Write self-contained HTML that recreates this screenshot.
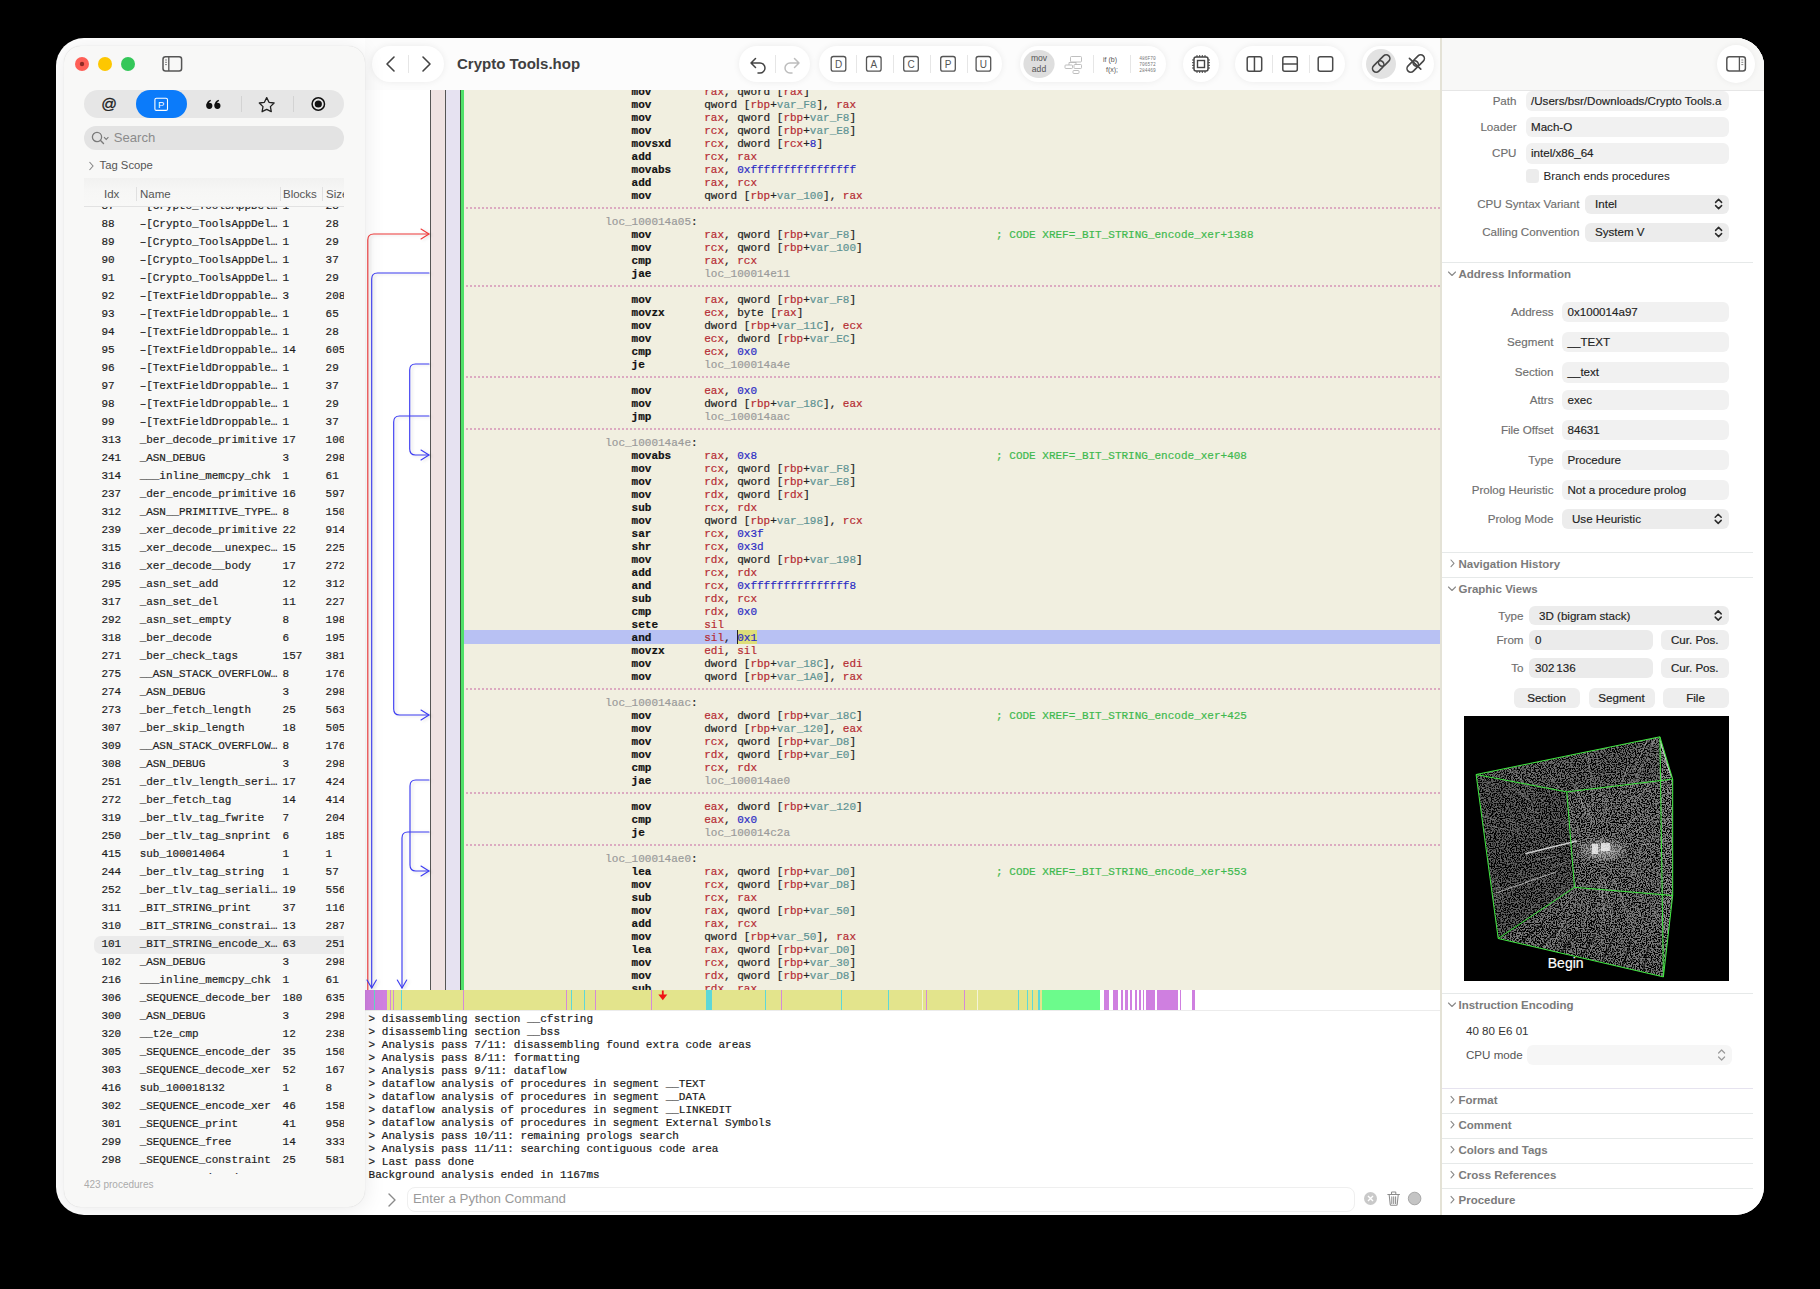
<!DOCTYPE html>
<html><head><meta charset="utf-8">
<style>
*{box-sizing:border-box}
html,body{margin:0;padding:0}
body{width:1820px;height:1289px;background:#000;position:relative;overflow:hidden;font-family:"Liberation Sans",sans-serif;color:#222}
.a{position:absolute}
#win{position:absolute;left:56px;top:38px;width:1708px;height:1177px;border-radius:28px;background:#fff;overflow:hidden}
#stage{position:absolute;left:-56px;top:-38px;width:1820px;height:1289px}
/* code */
#code{position:absolute;left:365px;top:90px;width:1076px;height:900px;overflow:hidden;background:#fff}
#codein{position:absolute;left:-365px;top:-90px;width:1820px;height:1289px}
.cl{position:absolute;font-family:"Liberation Mono",monospace;font-size:11px;line-height:13px;white-space:pre;color:#222;-webkit-text-stroke:0.2px currentColor}
.cl b{font-weight:normal}
.cl b.m{font-weight:bold;color:#111}
.r{color:#b52a32}
.v{color:#5e9393}
.n{color:#2b2bc4}
.l{color:#9a9a9a}
.cm{color:#3fb94e}
.hy{background:#dede7a}
.sep{position:absolute;left:466px;width:975px;height:2px;background-image:linear-gradient(90deg,#dcaac1 0 2px,transparent 2px 4px);background-size:4px 2px}
.hlband{position:absolute;left:464px;width:977px;height:14px;background:#b8c1f3}
.cursor{position:absolute;width:1.2px;height:13.2px;background:#222}
/* sidebar rows */
.rw{position:absolute;left:0;width:344px;height:18px;-webkit-text-stroke:0.2px currentColor;font-family:"Liberation Mono",monospace;font-size:11px;letter-spacing:-0.05px;line-height:18px;white-space:pre;color:#1e1e1e}
.rw span{position:absolute;top:0}
.selrow{position:absolute;left:94px;width:262px;height:18px;border-radius:7px;background:#ebebeb}
.con{font-size:11px;color:#1a1a1a}
.lbl{position:absolute;font-size:11.6px;color:#6e6e6e;-webkit-text-stroke:0.15px currentColor;text-align:right;white-space:nowrap;line-height:14px}
.fld{position:absolute;background:#f1f1f1;-webkit-text-stroke:0.15px currentColor;border-radius:6px;font-size:11.6px;color:#222;white-space:nowrap;line-height:14px;overflow:hidden}
.fld span{position:absolute;top:50%;transform:translateY(-50%)}
.sec{position:absolute;left:1458.5px;font-size:11.5px;font-weight:bold;color:#7b7b7b;white-space:nowrap;line-height:14px}
.hr{position:absolute;left:1442px;width:311px;height:1px;background:#e6e9e9}
.btn{position:absolute;background:#eeeeee;-webkit-text-stroke:0.2px currentColor;border-radius:6px;font-size:11.6px;color:#222;text-align:center;line-height:20px;white-space:nowrap}
.pill{position:absolute;top:46px;height:36px;border-radius:18px;background:#fff;box-shadow:0 0 7px rgba(0,0,0,0.07)}
.div{position:absolute;width:1px;background:#e6e6e6}
</style></head><body>
<div id="win"><div id="stage">

<!-- main content background (toolbar area) -->
<div class="a" style="left:365px;top:38px;width:1076px;height:52px;background:#fcfcfc"></div>

<!-- code view -->
<div id="code"><div id="codein">
  <div class="a" style="left:430px;top:0;width:1px;height:1289px;background:#555"></div>
  <div class="a" style="left:431px;top:0;width:14px;height:1289px;background:#efe2e2"></div>
  <div class="a" style="left:445px;top:0;width:1px;height:1289px;background:#555"></div>
  <div class="a" style="left:446px;top:0;width:14px;height:1289px;background:#e6e2f1"></div>
  <div class="a" style="left:460px;top:0;width:1px;height:1289px;background:#2f5a35"></div>
  <div class="a" style="left:461px;top:0;width:3px;height:1289px;background:#4fe068"></div>
  <div class="a" style="left:464px;top:0;width:977px;height:1289px;background:#f1efe0"></div>
  <svg class="a" style="left:0;top:0;filter:drop-shadow(2px 1px 1.5px rgba(0,0,0,0.13))" width="470" height="1000" viewBox="0 0 470 1000">
    <g fill="none" stroke-width="1.15" stroke-linecap="round" stroke-linejoin="round">
      <path d="M367.8 990 V240 Q367.8 234 373.8 234 H429" stroke="#f03a3a"/>
      <path d="M421 229 L429 234 L421 239" stroke="#f03a3a"/>
      <path d="M429 273 H377.5 Q371.7 273 371.7 279 V988" stroke="#3c3cf2"/>
      <path d="M367 980 L371.7 988 L376.4 980" stroke="#3c3cf2"/>
      <path d="M429 364 H415.5 Q409.7 364 409.7 370 V449 Q409.7 455 415.5 455 H429" stroke="#3c3cf2"/>
      <path d="M421 450 L429 455 L421 460" stroke="#3c3cf2"/>
      <path d="M429 416 H399.5 Q393.7 416 393.7 422 V709 Q393.7 715 399.5 715 H429" stroke="#3c3cf2"/>
      <path d="M421 710 L429 715 L421 720" stroke="#3c3cf2"/>
      <path d="M429 780 H415.8 Q410 780 410 786 V865 Q410 871 415.8 871 H429" stroke="#3c3cf2"/>
      <path d="M421 866 L429 871 L421 876" stroke="#3c3cf2"/>
      <path d="M429 832 H407.8 Q402 832 402 838 V988" stroke="#3c3cf2"/>
      <path d="M397.3 980 L402 988 L406.7 980" stroke="#3c3cf2"/>
    </g>
  </svg>
<div class="cl" style="top:85.57px;left:631.6px"><b class="m">mov</b></div>
<div class="cl" style="top:85.57px;left:704.2px"><b class="r">rax</b>, qword [<b class="r">rax</b>]</div>
<div class="cl" style="top:98.57px;left:631.6px"><b class="m">mov</b></div>
<div class="cl" style="top:98.57px;left:704.2px">qword [<b class="r">rbp</b>+<b class="v">var_F8</b>], <b class="r">rax</b></div>
<div class="cl" style="top:111.57px;left:631.6px"><b class="m">mov</b></div>
<div class="cl" style="top:111.57px;left:704.2px"><b class="r">rax</b>, qword [<b class="r">rbp</b>+<b class="v">var_F8</b>]</div>
<div class="cl" style="top:124.57px;left:631.6px"><b class="m">mov</b></div>
<div class="cl" style="top:124.57px;left:704.2px"><b class="r">rcx</b>, qword [<b class="r">rbp</b>+<b class="v">var_E8</b>]</div>
<div class="cl" style="top:137.57px;left:631.6px"><b class="m">movsxd</b></div>
<div class="cl" style="top:137.57px;left:704.2px"><b class="r">rcx</b>, dword [<b class="r">rcx</b>+<b class="n">8</b>]</div>
<div class="cl" style="top:150.57px;left:631.6px"><b class="m">add</b></div>
<div class="cl" style="top:150.57px;left:704.2px"><b class="r">rcx</b>, <b class="r">rax</b></div>
<div class="cl" style="top:163.57px;left:631.6px"><b class="m">movabs</b></div>
<div class="cl" style="top:163.57px;left:704.2px"><b class="r">rax</b>, <b class="n">0xffffffffffffffff</b></div>
<div class="cl" style="top:176.57px;left:631.6px"><b class="m">add</b></div>
<div class="cl" style="top:176.57px;left:704.2px"><b class="r">rax</b>, <b class="r">rcx</b></div>
<div class="cl" style="top:189.57px;left:631.6px"><b class="m">mov</b></div>
<div class="cl" style="top:189.57px;left:704.2px">qword [<b class="r">rbp</b>+<b class="v">var_100</b>], <b class="r">rax</b></div>
<div class="sep" style="top:206.90px"></div>
<div class="cl" style="top:215.57px;left:605.2px"><b class="l">loc_100014a05</b>:</div>
<div class="cl" style="top:228.57px;left:631.6px"><b class="m">mov</b></div>
<div class="cl" style="top:228.57px;left:704.2px"><b class="r">rax</b>, qword [<b class="r">rbp</b>+<b class="v">var_F8</b>]</div>
<div class="cl cm" style="top:228.57px;left:996.1px">; CODE XREF=_BIT_STRING_encode_xer+1388</div>
<div class="cl" style="top:241.57px;left:631.6px"><b class="m">mov</b></div>
<div class="cl" style="top:241.57px;left:704.2px"><b class="r">rcx</b>, qword [<b class="r">rbp</b>+<b class="v">var_100</b>]</div>
<div class="cl" style="top:254.57px;left:631.6px"><b class="m">cmp</b></div>
<div class="cl" style="top:254.57px;left:704.2px"><b class="r">rax</b>, <b class="r">rcx</b></div>
<div class="cl" style="top:267.57px;left:631.6px"><b class="m">jae</b></div>
<div class="cl" style="top:267.57px;left:704.2px"><b class="l">loc_100014e11</b></div>
<div class="sep" style="top:284.90px"></div>
<div class="cl" style="top:293.57px;left:631.6px"><b class="m">mov</b></div>
<div class="cl" style="top:293.57px;left:704.2px"><b class="r">rax</b>, qword [<b class="r">rbp</b>+<b class="v">var_F8</b>]</div>
<div class="cl" style="top:306.57px;left:631.6px"><b class="m">movzx</b></div>
<div class="cl" style="top:306.57px;left:704.2px"><b class="r">ecx</b>, byte [<b class="r">rax</b>]</div>
<div class="cl" style="top:319.57px;left:631.6px"><b class="m">mov</b></div>
<div class="cl" style="top:319.57px;left:704.2px">dword [<b class="r">rbp</b>+<b class="v">var_11C</b>], <b class="r">ecx</b></div>
<div class="cl" style="top:332.57px;left:631.6px"><b class="m">mov</b></div>
<div class="cl" style="top:332.57px;left:704.2px"><b class="r">ecx</b>, dword [<b class="r">rbp</b>+<b class="v">var_EC</b>]</div>
<div class="cl" style="top:345.57px;left:631.6px"><b class="m">cmp</b></div>
<div class="cl" style="top:345.57px;left:704.2px"><b class="r">ecx</b>, <b class="n">0x0</b></div>
<div class="cl" style="top:358.57px;left:631.6px"><b class="m">je</b></div>
<div class="cl" style="top:358.57px;left:704.2px"><b class="l">loc_100014a4e</b></div>
<div class="sep" style="top:375.90px"></div>
<div class="cl" style="top:384.57px;left:631.6px"><b class="m">mov</b></div>
<div class="cl" style="top:384.57px;left:704.2px"><b class="r">eax</b>, <b class="n">0x0</b></div>
<div class="cl" style="top:397.57px;left:631.6px"><b class="m">mov</b></div>
<div class="cl" style="top:397.57px;left:704.2px">dword [<b class="r">rbp</b>+<b class="v">var_18C</b>], <b class="r">eax</b></div>
<div class="cl" style="top:410.57px;left:631.6px"><b class="m">jmp</b></div>
<div class="cl" style="top:410.57px;left:704.2px"><b class="l">loc_100014aac</b></div>
<div class="sep" style="top:427.90px"></div>
<div class="cl" style="top:436.57px;left:605.2px"><b class="l">loc_100014a4e</b>:</div>
<div class="cl" style="top:449.57px;left:631.6px"><b class="m">movabs</b></div>
<div class="cl" style="top:449.57px;left:704.2px"><b class="r">rax</b>, <b class="n">0x8</b></div>
<div class="cl cm" style="top:449.57px;left:996.1px">; CODE XREF=_BIT_STRING_encode_xer+408</div>
<div class="cl" style="top:462.57px;left:631.6px"><b class="m">mov</b></div>
<div class="cl" style="top:462.57px;left:704.2px"><b class="r">rcx</b>, qword [<b class="r">rbp</b>+<b class="v">var_F8</b>]</div>
<div class="cl" style="top:475.57px;left:631.6px"><b class="m">mov</b></div>
<div class="cl" style="top:475.57px;left:704.2px"><b class="r">rdx</b>, qword [<b class="r">rbp</b>+<b class="v">var_E8</b>]</div>
<div class="cl" style="top:488.57px;left:631.6px"><b class="m">mov</b></div>
<div class="cl" style="top:488.57px;left:704.2px"><b class="r">rdx</b>, qword [<b class="r">rdx</b>]</div>
<div class="cl" style="top:501.57px;left:631.6px"><b class="m">sub</b></div>
<div class="cl" style="top:501.57px;left:704.2px"><b class="r">rcx</b>, <b class="r">rdx</b></div>
<div class="cl" style="top:514.57px;left:631.6px"><b class="m">mov</b></div>
<div class="cl" style="top:514.57px;left:704.2px">qword [<b class="r">rbp</b>+<b class="v">var_198</b>], <b class="r">rcx</b></div>
<div class="cl" style="top:527.57px;left:631.6px"><b class="m">sar</b></div>
<div class="cl" style="top:527.57px;left:704.2px"><b class="r">rcx</b>, <b class="n">0x3f</b></div>
<div class="cl" style="top:540.57px;left:631.6px"><b class="m">shr</b></div>
<div class="cl" style="top:540.57px;left:704.2px"><b class="r">rcx</b>, <b class="n">0x3d</b></div>
<div class="cl" style="top:553.57px;left:631.6px"><b class="m">mov</b></div>
<div class="cl" style="top:553.57px;left:704.2px"><b class="r">rdx</b>, qword [<b class="r">rbp</b>+<b class="v">var_198</b>]</div>
<div class="cl" style="top:566.57px;left:631.6px"><b class="m">add</b></div>
<div class="cl" style="top:566.57px;left:704.2px"><b class="r">rcx</b>, <b class="r">rdx</b></div>
<div class="cl" style="top:579.57px;left:631.6px"><b class="m">and</b></div>
<div class="cl" style="top:579.57px;left:704.2px"><b class="r">rcx</b>, <b class="n">0xfffffffffffffff8</b></div>
<div class="cl" style="top:592.57px;left:631.6px"><b class="m">sub</b></div>
<div class="cl" style="top:592.57px;left:704.2px"><b class="r">rdx</b>, <b class="r">rcx</b></div>
<div class="cl" style="top:605.57px;left:631.6px"><b class="m">cmp</b></div>
<div class="cl" style="top:605.57px;left:704.2px"><b class="r">rdx</b>, <b class="n">0x0</b></div>
<div class="cl" style="top:618.57px;left:631.6px"><b class="m">sete</b></div>
<div class="cl" style="top:618.57px;left:704.2px"><b class="r">sil</b></div>
<div class="hlband" style="top:629.97px"></div>
<div class="a" style="top:630.37px;left:737.6px;width:19.8px;height:13.2px;background:#dede7a"></div>
<div class="cl" style="top:631.57px;left:631.6px"><b class="m">and</b></div>
<div class="cl" style="top:631.57px;left:704.2px"><b class="r">sil</b>, <b class="n">0x1</b></div>
<div class="cursor" style="top:630.37px;left:737.2px"></div>
<div class="cl" style="top:644.57px;left:631.6px"><b class="m">movzx</b></div>
<div class="cl" style="top:644.57px;left:704.2px"><b class="r">edi</b>, <b class="r">sil</b></div>
<div class="cl" style="top:657.57px;left:631.6px"><b class="m">mov</b></div>
<div class="cl" style="top:657.57px;left:704.2px">dword [<b class="r">rbp</b>+<b class="v">var_18C</b>], <b class="r">edi</b></div>
<div class="cl" style="top:670.57px;left:631.6px"><b class="m">mov</b></div>
<div class="cl" style="top:670.57px;left:704.2px">qword [<b class="r">rbp</b>+<b class="v">var_1A0</b>], <b class="r">rax</b></div>
<div class="sep" style="top:687.90px"></div>
<div class="cl" style="top:696.57px;left:605.2px"><b class="l">loc_100014aac</b>:</div>
<div class="cl" style="top:709.57px;left:631.6px"><b class="m">mov</b></div>
<div class="cl" style="top:709.57px;left:704.2px"><b class="r">eax</b>, dword [<b class="r">rbp</b>+<b class="v">var_18C</b>]</div>
<div class="cl cm" style="top:709.57px;left:996.1px">; CODE XREF=_BIT_STRING_encode_xer+425</div>
<div class="cl" style="top:722.57px;left:631.6px"><b class="m">mov</b></div>
<div class="cl" style="top:722.57px;left:704.2px">dword [<b class="r">rbp</b>+<b class="v">var_120</b>], <b class="r">eax</b></div>
<div class="cl" style="top:735.57px;left:631.6px"><b class="m">mov</b></div>
<div class="cl" style="top:735.57px;left:704.2px"><b class="r">rcx</b>, qword [<b class="r">rbp</b>+<b class="v">var_D8</b>]</div>
<div class="cl" style="top:748.57px;left:631.6px"><b class="m">mov</b></div>
<div class="cl" style="top:748.57px;left:704.2px"><b class="r">rdx</b>, qword [<b class="r">rbp</b>+<b class="v">var_E0</b>]</div>
<div class="cl" style="top:761.57px;left:631.6px"><b class="m">cmp</b></div>
<div class="cl" style="top:761.57px;left:704.2px"><b class="r">rcx</b>, <b class="r">rdx</b></div>
<div class="cl" style="top:774.57px;left:631.6px"><b class="m">jae</b></div>
<div class="cl" style="top:774.57px;left:704.2px"><b class="l">loc_100014ae0</b></div>
<div class="sep" style="top:791.90px"></div>
<div class="cl" style="top:800.57px;left:631.6px"><b class="m">mov</b></div>
<div class="cl" style="top:800.57px;left:704.2px"><b class="r">eax</b>, dword [<b class="r">rbp</b>+<b class="v">var_120</b>]</div>
<div class="cl" style="top:813.57px;left:631.6px"><b class="m">cmp</b></div>
<div class="cl" style="top:813.57px;left:704.2px"><b class="r">eax</b>, <b class="n">0x0</b></div>
<div class="cl" style="top:826.57px;left:631.6px"><b class="m">je</b></div>
<div class="cl" style="top:826.57px;left:704.2px"><b class="l">loc_100014c2a</b></div>
<div class="sep" style="top:843.90px"></div>
<div class="cl" style="top:852.57px;left:605.2px"><b class="l">loc_100014ae0</b>:</div>
<div class="cl" style="top:865.57px;left:631.6px"><b class="m">lea</b></div>
<div class="cl" style="top:865.57px;left:704.2px"><b class="r">rax</b>, qword [<b class="r">rbp</b>+<b class="v">var_D0</b>]</div>
<div class="cl cm" style="top:865.57px;left:996.1px">; CODE XREF=_BIT_STRING_encode_xer+553</div>
<div class="cl" style="top:878.57px;left:631.6px"><b class="m">mov</b></div>
<div class="cl" style="top:878.57px;left:704.2px"><b class="r">rcx</b>, qword [<b class="r">rbp</b>+<b class="v">var_D8</b>]</div>
<div class="cl" style="top:891.57px;left:631.6px"><b class="m">sub</b></div>
<div class="cl" style="top:891.57px;left:704.2px"><b class="r">rcx</b>, <b class="r">rax</b></div>
<div class="cl" style="top:904.57px;left:631.6px"><b class="m">mov</b></div>
<div class="cl" style="top:904.57px;left:704.2px"><b class="r">rax</b>, qword [<b class="r">rbp</b>+<b class="v">var_50</b>]</div>
<div class="cl" style="top:917.57px;left:631.6px"><b class="m">add</b></div>
<div class="cl" style="top:917.57px;left:704.2px"><b class="r">rax</b>, <b class="r">rcx</b></div>
<div class="cl" style="top:930.57px;left:631.6px"><b class="m">mov</b></div>
<div class="cl" style="top:930.57px;left:704.2px">qword [<b class="r">rbp</b>+<b class="v">var_50</b>], <b class="r">rax</b></div>
<div class="cl" style="top:943.57px;left:631.6px"><b class="m">lea</b></div>
<div class="cl" style="top:943.57px;left:704.2px"><b class="r">rax</b>, qword [<b class="r">rbp</b>+<b class="v">var_D0</b>]</div>
<div class="cl" style="top:956.57px;left:631.6px"><b class="m">mov</b></div>
<div class="cl" style="top:956.57px;left:704.2px"><b class="r">rcx</b>, qword [<b class="r">rbp</b>+<b class="v">var_30</b>]</div>
<div class="cl" style="top:969.57px;left:631.6px"><b class="m">mov</b></div>
<div class="cl" style="top:969.57px;left:704.2px"><b class="r">rdx</b>, qword [<b class="r">rbp</b>+<b class="v">var_D8</b>]</div>
<div class="cl" style="top:982.57px;left:631.6px"><b class="m">sub</b></div>
<div class="cl" style="top:982.57px;left:704.2px"><b class="r">rdx</b>, <b class="r">rax</b></div>
</div></div>

<!-- overview strip -->
<div class="a" style="left:364px;top:990px;width:1077px;height:21px;background:#fff;border-bottom:1px solid #ececec"></div>
<svg class="a" style="left:0;top:990px" width="1441" height="20" viewBox="0 990 1441 20" shape-rendering="crispEdges">
  <rect x="364" y="990" width="23" height="20" fill="#cf7fe0"/>
  <rect x="374" y="990" width="1" height="20" fill="#63d8c6"/>
  <rect x="387" y="990" width="808" height="20" fill="#e3e48c"/>
  <g fill="#d48ad8">
    <rect x="390" y="990" width="1" height="20"/><rect x="392.5" y="990" width="1" height="20"/>
    <rect x="463" y="990" width="1" height="20"/><rect x="566" y="990" width="1" height="20"/>
    <rect x="595" y="990" width="1" height="20"/><rect x="651" y="990" width="1" height="20"/>
    <rect x="781" y="990" width="1" height="20"/><rect x="926" y="990" width="1" height="20"/>
    <rect x="964" y="990" width="1" height="20"/>
  </g>
  <g fill="#5ed8d8">
    <rect x="401" y="990" width="1" height="20"/><rect x="571" y="990" width="1" height="20"/>
    <rect x="584" y="990" width="1" height="20"/><rect x="706" y="990" width="6" height="20"/>
    <rect x="765" y="990" width="1" height="20"/><rect x="841" y="990" width="1" height="20"/>
    <rect x="888" y="990" width="1" height="20"/><rect x="1018" y="990" width="1" height="20"/>
    <rect x="1027" y="990" width="1" height="20"/><rect x="1032" y="990" width="1" height="20"/>
    <rect x="1038" y="990" width="2" height="20"/>
  </g>
  <g fill="#f4f4d8"><rect x="922" y="990" width="1" height="20"/><rect x="977" y="990" width="1" height="20"/></g>
  <rect x="1042" y="990" width="58" height="20" fill="#6cfb8c"/>
  <rect x="1100" y="990" width="95" height="20" fill="#fff"/>
  <g fill="#cf7fe0">
    <rect x="1104" y="990" width="4.5" height="20"/><rect x="1113" y="990" width="5" height="20"/>
    <rect x="1121" y="990" width="2" height="20"/><rect x="1125" y="990" width="2.5" height="20"/>
    <rect x="1129.5" y="990" width="2.5" height="20"/><rect x="1135" y="990" width="2" height="20"/>
    <rect x="1138.5" y="990" width="2" height="20"/><rect x="1142.5" y="990" width="1.5" height="20"/>
    <rect x="1146" y="990" width="9" height="20"/><rect x="1157" y="990" width="2.5" height="20"/>
    <rect x="1160" y="990" width="18" height="20"/><rect x="1179.5" y="990" width="1" height="20"/>
    <rect x="1192" y="990" width="3" height="20"/>
  </g>
  <g fill="#f01414" shape-rendering="geometricPrecision"><rect x="661.9" y="990.5" width="1.8" height="5.5"/><path d="M658.3 994.5 H667.3 L662.8 1000.3 Z"/></g>
</svg>

<!-- console -->
<div class="a" style="left:364px;top:1011px;width:1077px;height:204px;background:#fff"></div>
<div class="cl con" style="top:1012.87px;left:368.6px">&gt; disassembling section __cfstring</div>
<div class="cl con" style="top:1025.87px;left:368.6px">&gt; disassembling section __bss</div>
<div class="cl con" style="top:1038.87px;left:368.6px">&gt; Analysis pass 7/11: disassembling found extra code areas</div>
<div class="cl con" style="top:1051.87px;left:368.6px">&gt; Analysis pass 8/11: formatting</div>
<div class="cl con" style="top:1064.87px;left:368.6px">&gt; Analysis pass 9/11: dataflow</div>
<div class="cl con" style="top:1077.87px;left:368.6px">&gt; dataflow analysis of procedures in segment __TEXT</div>
<div class="cl con" style="top:1090.87px;left:368.6px">&gt; dataflow analysis of procedures in segment __DATA</div>
<div class="cl con" style="top:1103.87px;left:368.6px">&gt; dataflow analysis of procedures in segment __LINKEDIT</div>
<div class="cl con" style="top:1116.87px;left:368.6px">&gt; dataflow analysis of procedures in segment External Symbols</div>
<div class="cl con" style="top:1129.87px;left:368.6px">&gt; Analysis pass 10/11: remaining prologs search</div>
<div class="cl con" style="top:1142.87px;left:368.6px">&gt; Analysis pass 11/11: searching contiguous code area</div>
<div class="cl con" style="top:1155.87px;left:368.6px">&gt; Last pass done</div>
<div class="cl con" style="top:1168.87px;left:368.6px">Background analysis ended in 1167ms</div>
<!-- python input -->
<svg class="a" style="left:386px;top:1192px" width="12" height="16" viewBox="0 0 12 16"><path d="M3 2 L9 8 L3 14" fill="none" stroke="#8a8a8a" stroke-width="1.4" stroke-linecap="round" stroke-linejoin="round"/></svg>
<div class="a" style="left:407px;top:1186.5px;width:948px;height:25.5px;border-radius:8px;border:1px solid #efefef;background:#fff"></div>
<div class="a" style="left:413px;top:1191px;font-size:13.3px;line-height:16px;color:#9a9a9a;white-space:nowrap">Enter a Python Command</div>
<svg class="a" style="left:1362px;top:1190px" width="60" height="18" viewBox="0 0 60 18">
  <circle cx="8.5" cy="8.5" r="6.5" fill="#c9c9c9"/>
  <path d="M6 6 L11 11 M11 6 L6 11" stroke="#fff" stroke-width="1.4"/>
  <path d="M25.8 4.5 H37.5 M29.5 4.3 V2.6 Q29.5 2 30.2 2 H33.2 Q33.8 2 33.8 2.6 V4.3 M27.2 5 L28.2 14.4 Q28.3 15.2 29.1 15.2 H34.3 Q35.1 15.2 35.2 14.4 L36.2 5 M29.8 6.8 V13.4 M31.7 6.8 V13.4 M33.6 6.8 V13.4" fill="none" stroke="#8c8c8c" stroke-width="1.05" stroke-linecap="round"/>
  <circle cx="52.6" cy="8.5" r="6.3" fill="#c4c4c4" stroke="#9a9a9a" stroke-width="0.8"/>
</svg>

<!-- toolbar pills -->
<div class="pill" style="left:372px;width:72px"></div>
<div class="div" style="left:408px;top:55px;height:18px"></div>
<svg class="a" style="left:380px;top:54px" width="56" height="20" viewBox="0 0 56 20"><path d="M14 3 L7 10 L14 17 M43 3 L50 10 L43 17" fill="none" stroke="#444" stroke-width="1.6" stroke-linecap="round" stroke-linejoin="round"/></svg>
<div class="a" style="left:457px;top:55px;font-size:15px;font-weight:bold;color:#404040;line-height:18px;white-space:nowrap">Crypto Tools.hop</div>

<div class="pill" style="left:738.5px;width:71.5px"></div>
<div class="div" style="left:774.5px;top:55px;height:18px"></div>
<svg class="a" style="left:745px;top:54px" width="60" height="20" viewBox="0 0 60 20">
  <path d="M6 9 H15 A5 5 0 0 1 15 19 H13 M6 9 L10.5 4.5 M6 9 L10.5 13.5" fill="none" stroke="#444" stroke-width="1.5" stroke-linecap="round" stroke-linejoin="round"/>
  <path d="M54 9 H45 A5 5 0 0 0 45 19 H47 M54 9 L49.5 4.5 M54 9 L49.5 13.5" fill="none" stroke="#bdbdbd" stroke-width="1.5" stroke-linecap="round" stroke-linejoin="round"/>
</svg>

<div class="pill" style="left:819px;width:183px"></div>
<div class="div" style="left:855.5px;top:55px;height:18px"></div>
<div class="div" style="left:892.5px;top:55px;height:18px"></div>
<div class="div" style="left:930px;top:55px;height:18px"></div>
<div class="div" style="left:966.5px;top:55px;height:18px"></div>
<svg class="a" style="left:819px;top:46px" width="183" height="36" viewBox="0 0 183 36">
  <g fill="none" stroke="#555" stroke-width="1.3">
    <rect x="12.2" y="10.5" width="14.6" height="14.6" rx="2.2"/>
    <rect x="47.5" y="10.5" width="14.6" height="14.6" rx="2.2"/>
    <rect x="84.7" y="10.5" width="14.6" height="14.6" rx="2.2"/>
    <rect x="121.7" y="10.5" width="14.6" height="14.6" rx="2.2"/>
    <rect x="157.1" y="10.5" width="14.6" height="14.6" rx="2.2"/>
  </g>
  <g font-family="Liberation Sans" font-size="10" fill="#555" text-anchor="middle">
    <text x="19.5" y="21.8">D</text><text x="54.8" y="21.8">A</text><text x="92" y="21.8">C</text><text x="129" y="21.8">P</text><text x="164.4" y="21.8">U</text>
  </g>
</svg>

<div class="pill" style="left:1019.5px;width:146px"></div>
<div class="div" style="left:1092.5px;top:55px;height:18px"></div>
<div class="div" style="left:1129.5px;top:55px;height:18px"></div>
<svg class="a" style="left:1019.5px;top:46px" width="146" height="36" viewBox="0 0 146 36">
  <ellipse cx="19" cy="18" rx="15.6" ry="14" fill="#dedede"/>
  <g font-family="Liberation Sans" font-size="8.6" fill="#555" text-anchor="middle"><text x="19" y="15">mov</text><text x="19" y="25.5">add</text></g>
  <g fill="none" stroke="#b8b8b8" stroke-width="0.9">
    <rect x="50.5" y="10.5" width="11" height="5.5" rx="1"/>
    <rect x="45" y="19" width="7.5" height="3.5" rx="0.8"/>
    <rect x="54" y="18.5" width="7.5" height="4" rx="0.8"/>
    <rect x="53" y="24.5" width="6" height="3" rx="0.8"/>
    <path d="M56 16 V18.5 M49 19 V16.5 H56"/>
  </g>
  <g font-family="Liberation Sans" font-size="7" fill="#555" text-anchor="middle"><text x="90" y="16">if (b)</text><text x="92" y="25.5">f(x);</text></g>
  <g font-family="Liberation Mono" font-size="4.6" fill="#777" text-anchor="middle"><text x="127.5" y="13.5">486F70</text><text x="127.5" y="19.5">706572</text><text x="127.5" y="25.5">284469</text></g>
</svg>

<div class="pill" style="left:1182.5px;width:36px"></div>
<svg class="a" style="left:1182.5px;top:46px" width="36" height="36" viewBox="0 0 36 36">
  <rect x="11" y="11" width="14" height="14" rx="2" fill="none" stroke="#444" stroke-width="1.5"/>
  <rect x="14.5" y="14.5" width="7" height="7" fill="none" stroke="#444" stroke-width="1.4"/>
  <path d="M14 9 V11 M16.7 9 V11 M19.3 9 V11 M22 9 V11 M14 25 V27 M16.7 25 V27 M19.3 25 V27 M22 25 V27 M9 14 H11 M9 16.7 H11 M9 19.3 H11 M9 22 H11 M25 14 H27 M25 16.7 H27 M25 19.3 H27 M25 22 H27" stroke="#444" stroke-width="1"/>
</svg>

<div class="pill" style="left:1235px;width:110px"></div>
<div class="div" style="left:1271.5px;top:55px;height:18px"></div>
<div class="div" style="left:1308.5px;top:55px;height:18px"></div>
<svg class="a" style="left:1235px;top:46px" width="110" height="36" viewBox="0 0 110 36">
  <g fill="none" stroke="#4a4a4a" stroke-width="1.5">
    <rect x="12.2" y="10.8" width="14.5" height="14.5" rx="2"/><path d="M19.45 10.8 V25.3"/>
    <rect x="47.8" y="10.8" width="14.5" height="14.5" rx="2"/><path d="M47.8 18.05 H62.3"/>
    <rect x="83.2" y="10.8" width="14.5" height="14.5" rx="2"/>
  </g>
</svg>

<div class="pill" style="left:1361.5px;width:72px"></div>
<svg class="a" style="left:1361.5px;top:46px" width="72" height="36" viewBox="0 0 72 36">
  <circle cx="19" cy="18" r="15" fill="#e2e2e2"/>
  <g fill="none" stroke="#474747" stroke-width="1.6"><rect x="9.70" y="16.80" width="13" height="7.4" rx="3.7" transform="rotate(-45 16.2 20.5)"/><rect x="15.70" y="10.80" width="13" height="7.4" rx="3.7" transform="rotate(-45 22.2 14.5)"/></g>
  <g fill="none" stroke="#474747" stroke-width="1.6"><rect x="44.20" y="16.80" width="13" height="7.4" rx="3.7" transform="rotate(-45 50.7 20.5)"/><rect x="50.20" y="10.80" width="13" height="7.4" rx="3.7" transform="rotate(-45 56.7 14.5)"/>
    <path d="M47.4 12.3 L58.8 23.1" stroke-linecap="round"/>
  </g>
</svg>

<!-- sidebar panel -->
<div class="a" style="left:64px;top:46px;width:301px;height:1161px;border-radius:17px;background:#f8f8f7;box-shadow:0 0 1px rgba(0,0,0,0.18),0 2px 22px rgba(0,0,0,0.09)"></div>
<svg class="a" style="left:70px;top:52px" width="120" height="24" viewBox="70 52 120 24">
  <circle cx="82" cy="64" r="7" fill="#fe5f57"/><circle cx="82" cy="64" r="2.2" fill="#8f2a25"/>
  <circle cx="105" cy="64" r="7" fill="#fdc701"/>
  <circle cx="128" cy="64" r="7" fill="#34c759"/>
  <rect x="163" y="56.8" width="18.6" height="14.2" rx="2.5" fill="none" stroke="#555" stroke-width="1.5"/>
  <path d="M168.8 57 V71" stroke="#555" stroke-width="1.3"/>
  <path d="M165 60 H167 M165 62.3 H167 M165 64.6 H167" stroke="#777" stroke-width="0.9"/>
</svg>
<!-- segmented -->
<div class="a" style="left:84px;top:90px;width:260px;height:28px;border-radius:14px;background:#e6e6e6"></div>
<div class="a" style="left:136px;top:90px;width:50.5px;height:28px;border-radius:14px;background:#0b7bfa"></div>
<div class="div" style="left:240.5px;top:96px;height:16px;background:#d3d3d3"></div>
<div class="div" style="left:292.5px;top:96px;height:16px;background:#d3d3d3"></div>
<svg class="a" style="left:84px;top:90px" width="260" height="28" viewBox="0 0 260 28">
  <text x="25.2" y="19.4" font-family="Liberation Sans" font-size="15.5" fill="#222" text-anchor="middle" stroke="#222" stroke-width="0.3">@</text>
  <rect x="70.9" y="8.2" width="12.6" height="12.2" rx="1.5" fill="none" stroke="#fff" stroke-width="1.1"/>
  <text x="77.2" y="17.8" font-family="Liberation Sans" font-size="9.5" fill="#fff" text-anchor="middle">P</text>
  <g fill="#111" transform="translate(0 -0.8)"><circle cx="125.3" cy="16.6" r="3.1"/><path d="M122.4 16.2 Q122.6 11.8 126.6 10.6 L126.9 11.7 Q124.6 12.7 124.6 15 Z"/><circle cx="133.4" cy="16.6" r="3.1"/><path d="M130.5 16.2 Q130.7 11.8 134.7 10.6 L135 11.7 Q132.7 12.7 132.7 15 Z"/></g>
  <path d="M182.7 7.6 L185 12.3 L190.1 13 L186.4 16.6 L187.3 21.7 L182.7 19.3 L178.1 21.7 L179 16.6 L175.3 13 L180.4 12.3 Z" fill="none" stroke="#222" stroke-width="1.3" stroke-linejoin="round"/>
  <circle cx="234.3" cy="14" r="6.2" fill="none" stroke="#111" stroke-width="1.5"/>
  <circle cx="234.3" cy="14" r="3.6" fill="#111"/>
</svg>
<!-- search -->
<div class="a" style="left:84px;top:126px;width:260px;height:24px;border-radius:12px;background:#e3e3e3"></div>
<svg class="a" style="left:90px;top:130px" width="22" height="16" viewBox="0 0 22 16">
  <circle cx="7" cy="7" r="4.6" fill="none" stroke="#7a7a7a" stroke-width="1.3"/>
  <path d="M10.3 10.3 L13.5 13.5" stroke="#7a7a7a" stroke-width="1.4" stroke-linecap="round"/>
  <path d="M14 7.2 L16.2 9.4 L18.4 7.2" fill="none" stroke="#7a7a7a" stroke-width="1.1"/>
</svg>
<div class="a" style="left:113.8px;top:130px;font-size:13.1px;line-height:16px;color:#8b8b8b">Search</div>
<svg class="a" style="left:86px;top:159px" width="10" height="14" viewBox="0 0 10 14"><path d="M3.5 3 L7 7 L3.5 11" fill="none" stroke="#888" stroke-width="1.1"/></svg>
<div class="a" style="left:99.5px;top:158px;font-size:11.3px;line-height:14px;color:#555">Tag Scope</div>

<!-- table -->
<div class="a" style="left:84px;top:207px;width:260px;height:966.5px;overflow:hidden">
  <div class="a" style="left:-84px;top:-207px;width:400px;height:1300px">
<div class="rw" style="top:197.05px"><span style="left:101.5px">87</span><span style="left:139.7px">–[Crypto_ToolsAppDel…</span><span style="left:282.6px">1</span><span class="sz" style="left:325.6px">28</span></div>
<div class="rw" style="top:215.05px"><span style="left:101.5px">88</span><span style="left:139.7px">–[Crypto_ToolsAppDel…</span><span style="left:282.6px">1</span><span class="sz" style="left:325.6px">28</span></div>
<div class="rw" style="top:233.05px"><span style="left:101.5px">89</span><span style="left:139.7px">–[Crypto_ToolsAppDel…</span><span style="left:282.6px">1</span><span class="sz" style="left:325.6px">29</span></div>
<div class="rw" style="top:251.05px"><span style="left:101.5px">90</span><span style="left:139.7px">–[Crypto_ToolsAppDel…</span><span style="left:282.6px">1</span><span class="sz" style="left:325.6px">37</span></div>
<div class="rw" style="top:269.05px"><span style="left:101.5px">91</span><span style="left:139.7px">–[Crypto_ToolsAppDel…</span><span style="left:282.6px">1</span><span class="sz" style="left:325.6px">29</span></div>
<div class="rw" style="top:287.05px"><span style="left:101.5px">92</span><span style="left:139.7px">–[TextFieldDroppable…</span><span style="left:282.6px">3</span><span class="sz" style="left:325.6px">208</span></div>
<div class="rw" style="top:305.05px"><span style="left:101.5px">93</span><span style="left:139.7px">–[TextFieldDroppable…</span><span style="left:282.6px">1</span><span class="sz" style="left:325.6px">65</span></div>
<div class="rw" style="top:323.05px"><span style="left:101.5px">94</span><span style="left:139.7px">–[TextFieldDroppable…</span><span style="left:282.6px">1</span><span class="sz" style="left:325.6px">28</span></div>
<div class="rw" style="top:341.05px"><span style="left:101.5px">95</span><span style="left:139.7px">–[TextFieldDroppable…</span><span style="left:282.6px">14</span><span class="sz" style="left:325.6px">605</span></div>
<div class="rw" style="top:359.05px"><span style="left:101.5px">96</span><span style="left:139.7px">–[TextFieldDroppable…</span><span style="left:282.6px">1</span><span class="sz" style="left:325.6px">29</span></div>
<div class="rw" style="top:377.05px"><span style="left:101.5px">97</span><span style="left:139.7px">–[TextFieldDroppable…</span><span style="left:282.6px">1</span><span class="sz" style="left:325.6px">37</span></div>
<div class="rw" style="top:395.05px"><span style="left:101.5px">98</span><span style="left:139.7px">–[TextFieldDroppable…</span><span style="left:282.6px">1</span><span class="sz" style="left:325.6px">29</span></div>
<div class="rw" style="top:413.05px"><span style="left:101.5px">99</span><span style="left:139.7px">–[TextFieldDroppable…</span><span style="left:282.6px">1</span><span class="sz" style="left:325.6px">37</span></div>
<div class="rw" style="top:431.05px"><span style="left:101.5px">313</span><span style="left:139.7px">_ber_decode_primitive</span><span style="left:282.6px">17</span><span class="sz" style="left:325.6px">100</span></div>
<div class="rw" style="top:449.05px"><span style="left:101.5px">241</span><span style="left:139.7px">_ASN_DEBUG</span><span style="left:282.6px">3</span><span class="sz" style="left:325.6px">298</span></div>
<div class="rw" style="top:467.05px"><span style="left:101.5px">314</span><span style="left:139.7px">___inline_memcpy_chk</span><span style="left:282.6px">1</span><span class="sz" style="left:325.6px">61</span></div>
<div class="rw" style="top:485.05px"><span style="left:101.5px">237</span><span style="left:139.7px">_der_encode_primitive</span><span style="left:282.6px">16</span><span class="sz" style="left:325.6px">597</span></div>
<div class="rw" style="top:503.05px"><span style="left:101.5px">312</span><span style="left:139.7px">_ASN__PRIMITIVE_TYPE…</span><span style="left:282.6px">8</span><span class="sz" style="left:325.6px">150</span></div>
<div class="rw" style="top:521.05px"><span style="left:101.5px">239</span><span style="left:139.7px">_xer_decode_primitive</span><span style="left:282.6px">22</span><span class="sz" style="left:325.6px">914</span></div>
<div class="rw" style="top:539.05px"><span style="left:101.5px">315</span><span style="left:139.7px">_xer_decode__unexpec…</span><span style="left:282.6px">15</span><span class="sz" style="left:325.6px">225</span></div>
<div class="rw" style="top:557.05px"><span style="left:101.5px">316</span><span style="left:139.7px">_xer_decode__body</span><span style="left:282.6px">17</span><span class="sz" style="left:325.6px">272</span></div>
<div class="rw" style="top:575.05px"><span style="left:101.5px">295</span><span style="left:139.7px">_asn_set_add</span><span style="left:282.6px">12</span><span class="sz" style="left:325.6px">312</span></div>
<div class="rw" style="top:593.05px"><span style="left:101.5px">317</span><span style="left:139.7px">_asn_set_del</span><span style="left:282.6px">11</span><span class="sz" style="left:325.6px">227</span></div>
<div class="rw" style="top:611.05px"><span style="left:101.5px">292</span><span style="left:139.7px">_asn_set_empty</span><span style="left:282.6px">8</span><span class="sz" style="left:325.6px">198</span></div>
<div class="rw" style="top:629.05px"><span style="left:101.5px">318</span><span style="left:139.7px">_ber_decode</span><span style="left:282.6px">6</span><span class="sz" style="left:325.6px">195</span></div>
<div class="rw" style="top:647.05px"><span style="left:101.5px">271</span><span style="left:139.7px">_ber_check_tags</span><span style="left:282.6px">157</span><span class="sz" style="left:325.6px">381</span></div>
<div class="rw" style="top:665.05px"><span style="left:101.5px">275</span><span style="left:139.7px">__ASN_STACK_OVERFLOW…</span><span style="left:282.6px">8</span><span class="sz" style="left:325.6px">176</span></div>
<div class="rw" style="top:683.05px"><span style="left:101.5px">274</span><span style="left:139.7px">_ASN_DEBUG</span><span style="left:282.6px">3</span><span class="sz" style="left:325.6px">298</span></div>
<div class="rw" style="top:701.05px"><span style="left:101.5px">273</span><span style="left:139.7px">_ber_fetch_length</span><span style="left:282.6px">25</span><span class="sz" style="left:325.6px">563</span></div>
<div class="rw" style="top:719.05px"><span style="left:101.5px">307</span><span style="left:139.7px">_ber_skip_length</span><span style="left:282.6px">18</span><span class="sz" style="left:325.6px">505</span></div>
<div class="rw" style="top:737.05px"><span style="left:101.5px">309</span><span style="left:139.7px">__ASN_STACK_OVERFLOW…</span><span style="left:282.6px">8</span><span class="sz" style="left:325.6px">176</span></div>
<div class="rw" style="top:755.05px"><span style="left:101.5px">308</span><span style="left:139.7px">_ASN_DEBUG</span><span style="left:282.6px">3</span><span class="sz" style="left:325.6px">298</span></div>
<div class="rw" style="top:773.05px"><span style="left:101.5px">251</span><span style="left:139.7px">_der_tlv_length_seri…</span><span style="left:282.6px">17</span><span class="sz" style="left:325.6px">424</span></div>
<div class="rw" style="top:791.05px"><span style="left:101.5px">272</span><span style="left:139.7px">_ber_fetch_tag</span><span style="left:282.6px">14</span><span class="sz" style="left:325.6px">414</span></div>
<div class="rw" style="top:809.05px"><span style="left:101.5px">319</span><span style="left:139.7px">_ber_tlv_tag_fwrite</span><span style="left:282.6px">7</span><span class="sz" style="left:325.6px">204</span></div>
<div class="rw" style="top:827.05px"><span style="left:101.5px">250</span><span style="left:139.7px">_ber_tlv_tag_snprint</span><span style="left:282.6px">6</span><span class="sz" style="left:325.6px">185</span></div>
<div class="rw" style="top:845.05px"><span style="left:101.5px">415</span><span style="left:139.7px">sub_100014064</span><span style="left:282.6px">1</span><span class="sz" style="left:325.6px">1</span></div>
<div class="rw" style="top:863.05px"><span style="left:101.5px">244</span><span style="left:139.7px">_ber_tlv_tag_string</span><span style="left:282.6px">1</span><span class="sz" style="left:325.6px">57</span></div>
<div class="rw" style="top:881.05px"><span style="left:101.5px">252</span><span style="left:139.7px">_ber_tlv_tag_seriali…</span><span style="left:282.6px">19</span><span class="sz" style="left:325.6px">556</span></div>
<div class="rw" style="top:899.05px"><span style="left:101.5px">311</span><span style="left:139.7px">_BIT_STRING_print</span><span style="left:282.6px">37</span><span class="sz" style="left:325.6px">116</span></div>
<div class="rw" style="top:917.05px"><span style="left:101.5px">310</span><span style="left:139.7px">_BIT_STRING_constrai…</span><span style="left:282.6px">13</span><span class="sz" style="left:325.6px">287</span></div>
<div class="selrow" style="top:935.55px"></div>
<div class="rw" style="top:935.05px"><span style="left:101.5px">101</span><span style="left:139.7px">_BIT_STRING_encode_x…</span><span style="left:282.6px">63</span><span class="sz" style="left:325.6px">251</span></div>
<div class="rw" style="top:953.05px"><span style="left:101.5px">102</span><span style="left:139.7px">_ASN_DEBUG</span><span style="left:282.6px">3</span><span class="sz" style="left:325.6px">298</span></div>
<div class="rw" style="top:971.05px"><span style="left:101.5px">216</span><span style="left:139.7px">___inline_memcpy_chk</span><span style="left:282.6px">1</span><span class="sz" style="left:325.6px">61</span></div>
<div class="rw" style="top:989.05px"><span style="left:101.5px">306</span><span style="left:139.7px">_SEQUENCE_decode_ber</span><span style="left:282.6px">180</span><span class="sz" style="left:325.6px">635</span></div>
<div class="rw" style="top:1007.05px"><span style="left:101.5px">300</span><span style="left:139.7px">_ASN_DEBUG</span><span style="left:282.6px">3</span><span class="sz" style="left:325.6px">298</span></div>
<div class="rw" style="top:1025.05px"><span style="left:101.5px">320</span><span style="left:139.7px">__t2e_cmp</span><span style="left:282.6px">12</span><span class="sz" style="left:325.6px">238</span></div>
<div class="rw" style="top:1043.05px"><span style="left:101.5px">305</span><span style="left:139.7px">_SEQUENCE_encode_der</span><span style="left:282.6px">35</span><span class="sz" style="left:325.6px">150</span></div>
<div class="rw" style="top:1061.05px"><span style="left:101.5px">303</span><span style="left:139.7px">_SEQUENCE_decode_xer</span><span style="left:282.6px">52</span><span class="sz" style="left:325.6px">167</span></div>
<div class="rw" style="top:1079.05px"><span style="left:101.5px">416</span><span style="left:139.7px">sub_100018132</span><span style="left:282.6px">1</span><span class="sz" style="left:325.6px">8</span></div>
<div class="rw" style="top:1097.05px"><span style="left:101.5px">302</span><span style="left:139.7px">_SEQUENCE_encode_xer</span><span style="left:282.6px">46</span><span class="sz" style="left:325.6px">158</span></div>
<div class="rw" style="top:1115.05px"><span style="left:101.5px">301</span><span style="left:139.7px">_SEQUENCE_print</span><span style="left:282.6px">41</span><span class="sz" style="left:325.6px">958</span></div>
<div class="rw" style="top:1133.05px"><span style="left:101.5px">299</span><span style="left:139.7px">_SEQUENCE_free</span><span style="left:282.6px">14</span><span class="sz" style="left:325.6px">333</span></div>
<div class="rw" style="top:1151.05px"><span style="left:101.5px">298</span><span style="left:139.7px">_SEQUENCE_constraint</span><span style="left:282.6px">25</span><span class="sz" style="left:325.6px">581</span></div>
<div class="rw" style="top:1169.05px"><span style="left:101.5px">297</span><span style="left:139.7px">_SEQUENCE_decode_per</span><span style="left:282.6px">22</span><span class="sz" style="left:325.6px">412</span></div>
  </div>
</div>
<div class="a" style="left:84px;top:178px;width:260px;height:29px;background:linear-gradient(#f1f1f0,#f6f6f5 40%,#f8f8f7);border-bottom:1px solid #e2e2e2"></div>
<div class="a" style="left:104px;top:187px;font-size:11.5px;line-height:14px;color:#555;white-space:nowrap">Idx</div>
<div class="a" style="left:140px;top:187px;font-size:11.5px;line-height:14px;color:#555;white-space:nowrap">Name</div>
<div class="a" style="left:283px;top:187px;font-size:11.5px;line-height:14px;color:#555;white-space:nowrap">Blocks</div>
<div class="a" style="left:326px;top:187px;width:18px;overflow:hidden;font-size:11.5px;line-height:14px;color:#555;white-space:nowrap">Size</div>
<div class="div" style="left:136px;top:187px;height:14px;background:#e0e0e0"></div>
<div class="div" style="left:279.5px;top:187px;height:14px;background:#e0e0e0"></div>
<div class="div" style="left:322px;top:187px;height:14px;background:#e0e0e0"></div>
<div class="a" style="left:84px;top:1177.5px;font-size:10px;line-height:14px;color:#ababab;white-space:nowrap">423 procedures</div>

<!-- inspector -->
<div class="a" style="left:1440px;top:38px;width:324px;height:1177px;background:#fff;border-left:2px solid #e4e2d6"></div>
<div class="a" style="left:1442px;top:38px;width:322px;height:53px;background:#f8f8f7;border-bottom:1px solid #e6e6e6"></div>
<div class="a" style="left:1717px;top:45px;width:38px;height:38px;border-radius:19px;background:#fff;box-shadow:0 0 6px rgba(0,0,0,0.06)"></div>
<svg class="a" style="left:1724px;top:54px" width="24" height="20" viewBox="0 0 24 20">
  <rect x="2.8" y="2.8" width="18.6" height="14.2" rx="2.5" fill="none" stroke="#555" stroke-width="1.5"/>
  <path d="M15.4 3 V17" stroke="#555" stroke-width="1.3"/>
  <path d="M17.3 6 H19.3 M17.3 8.3 H19.3 M17.3 10.6 H19.3" stroke="#777" stroke-width="0.9"/>
</svg>

<div class="a" style="left:1442px;top:91px;width:322px;height:1124px;overflow:hidden">
<div class="a" style="left:-1442px;top:-91px;width:1820px;height:1300px">
  <div class="lbl" style="left:1400px;width:116.5px;top:94px">Path</div>
  <div class="fld" style="left:1525.5px;top:91px;width:203px;height:20px"><span style="left:5.5px">/Users/bsr/Downloads/Crypto Tools.a</span></div>
  <div class="lbl" style="left:1400px;width:116.5px;top:120px">Loader</div>
  <div class="fld" style="left:1525.5px;top:117px;width:203px;height:20px"><span style="left:5.5px">Mach-O</span></div>
  <div class="lbl" style="left:1400px;width:116.5px;top:146px">CPU</div>
  <div class="fld" style="left:1525.5px;top:143px;width:203px;height:20.5px"><span style="left:5.5px">intel/x86_64</span></div>
  <div class="a" style="left:1525.5px;top:169px;width:13px;height:13.5px;border-radius:3.5px;background:#ececec"></div>
  <div class="a" style="left:1543.5px;top:169px;font-size:11.6px;line-height:14px;color:#222;white-space:nowrap">Branch ends procedures</div>

  <div class="lbl" style="left:1440px;width:139.5px;top:197px">CPU Syntax Variant</div>
  <div class="fld" style="left:1585px;top:194.5px;width:143.5px;height:19.5px;background:#ececec"><span style="left:10px">Intel</span></div>
  <div class="lbl" style="left:1440px;width:139.5px;top:225px">Calling Convention</div>
  <div class="fld" style="left:1585px;top:222.5px;width:143.5px;height:19px;background:#ececec"><span style="left:10px">System V</span></div>

  <div class="hr" style="top:262px"></div>
  <div class="sec" style="top:266.5px">Address Information</div>

  <div class="lbl" style="left:1440px;width:113.5px;top:304.5px">Address</div>
  <div class="fld" style="left:1562px;top:301.5px;width:166.5px;height:20.5px"><span style="left:5.5px">0x100014a97</span></div>
  <div class="lbl" style="left:1440px;width:113.5px;top:335px">Segment</div>
  <div class="fld" style="left:1562px;top:331.5px;width:166.5px;height:20.5px"><span style="left:5.5px">__TEXT</span></div>
  <div class="lbl" style="left:1440px;width:113.5px;top:365px">Section</div>
  <div class="fld" style="left:1562px;top:361.5px;width:166.5px;height:21px"><span style="left:5.5px">__text</span></div>
  <div class="lbl" style="left:1440px;width:113.5px;top:393px">Attrs</div>
  <div class="fld" style="left:1562px;top:389.5px;width:166.5px;height:20.5px"><span style="left:5.5px">exec</span></div>
  <div class="lbl" style="left:1440px;width:113.5px;top:423px">File Offset</div>
  <div class="fld" style="left:1562px;top:419.5px;width:166.5px;height:20.5px"><span style="left:5.5px">84631</span></div>
  <div class="lbl" style="left:1440px;width:113.5px;top:453px">Type</div>
  <div class="fld" style="left:1562px;top:449.5px;width:166.5px;height:20.5px"><span style="left:5.5px">Procedure</span></div>
  <div class="lbl" style="left:1440px;width:113.5px;top:483px">Prolog Heuristic</div>
  <div class="fld" style="left:1562px;top:479.5px;width:166.5px;height:20.5px"><span style="left:5.5px">Not a procedure prolog</span></div>
  <div class="lbl" style="left:1440px;width:113.5px;top:512px">Prolog Mode</div>
  <div class="fld" style="left:1562px;top:509px;width:166.5px;height:19.5px;background:#ececec"><span style="left:10px">Use Heuristic</span></div>

  <div class="hr" style="top:552px"></div>
  <div class="sec" style="top:556.5px">Navigation History</div>
  <div class="hr" style="top:577px"></div>
  <div class="sec" style="top:581.5px">Graphic Views</div>

  <div class="lbl" style="left:1440px;width:83.5px;top:609px">Type</div>
  <div class="fld" style="left:1529px;top:606px;width:199.5px;height:19px;background:#ececec"><span style="left:10px">3D (bigram stack)</span></div>
  <div class="lbl" style="left:1440px;width:83.5px;top:633px">From</div>
  <div class="fld" style="left:1529px;top:629.5px;width:123.5px;height:20.5px;background:#ebebeb"><span style="left:6px">0</span></div>
  <div class="btn" style="left:1661px;top:630px;width:67.5px;height:20px">Cur. Pos.</div>
  <div class="lbl" style="left:1440px;width:83.5px;top:660.5px">To</div>
  <div class="fld" style="left:1529px;top:657.5px;width:123.5px;height:20.5px;background:#ebebeb"><span style="left:6px">302<span style="position:static;display:inline-block;width:2px"></span>136</span></div>
  <div class="btn" style="left:1661px;top:657.5px;width:67.5px;height:20px">Cur. Pos.</div>
  <div class="btn" style="left:1513.5px;top:687.5px;width:66px;height:20px">Section</div>
  <div class="btn" style="left:1588.5px;top:687.5px;width:66px;height:20px">Segment</div>
  <div class="btn" style="left:1662.5px;top:687.5px;width:66px;height:20px">File</div>

  <!-- 3D view -->
  <svg class="a" style="left:1464px;top:716px" width="265" height="265" viewBox="0 0 265 265">
<defs><clipPath id="hullc"><polygon points="12.1,58.5 195.9,20.8 208.7,63.1 208.7,179.5 199.4,260.9 34.2,222.5"/></clipPath>
<filter id="nz" x="0" y="0" width="265" height="265" filterUnits="userSpaceOnUse">
<feTurbulence type="fractalNoise" baseFrequency="0.8" numOctaves="2" seed="7" result="t"/>
<feColorMatrix in="t" type="matrix" values="0 0 0 0 0  0 0 0 0 0  0 0 0 0 0  0 0 0 7 -3.15" result="m"/>
<feComposite in="m" in2="SourceAlpha" operator="in"/></filter>
<radialGradient id="glow" cx="0.5" cy="0.5" r="0.5"><stop offset="0" stop-color="#fff" stop-opacity="0.55"/><stop offset="1" stop-color="#fff" stop-opacity="0"/></radialGradient>
</defs>
<rect width="265" height="265" fill="#000"/>
<g clip-path="url(#hullc)">
<polygon points="12.1,58.5 195.9,20.8 208.7,63.1 102.8,75.9" fill="#6c6c6c"/>
<polygon points="12.1,58.5 102.8,75.9 110.5,171.3 34.2,222.5" fill="#5e5e5e"/>
<polygon points="102.8,75.9 208.7,63.1 208.7,179.5 110.5,171.3" fill="#7a7a7a"/>
<polygon points="110.5,171.3 208.7,179.5 199.4,260.9 34.2,222.5" fill="#787878"/>
<polygon points="195.9,20.8 199.4,260.9 208.7,179.5 208.7,63.1" fill="#8a8a8a"/>
<polygon points="12.1,58.5 195.9,20.8 208.7,63.1 208.7,179.5 199.4,260.9 34.2,222.5" fill="#000" filter="url(#nz)"/>
<g stroke-width="1" fill="none"><path d="M33.5 164.3 L-2.4 175.4" stroke="rgb(179,179,179)" stroke-opacity="0.46"/><path d="M167.2 91.5 L187.9 64.9" stroke="rgb(180,180,180)" stroke-opacity="0.52"/><path d="M145.3 95.8 L150.0 78.7" stroke="rgb(131,131,131)" stroke-opacity="0.49"/><path d="M225.3 58.6 L246.2 41.4" stroke="rgb(170,170,170)" stroke-opacity="0.64"/><path d="M70.1 38.9 L62.7 28.2" stroke="rgb(121,121,121)" stroke-opacity="0.59"/><path d="M162.8 144.7 L196.2 158.6" stroke="rgb(123,123,123)" stroke-opacity="0.57"/><path d="M83.9 231.2 L77.4 243.9" stroke="rgb(149,149,149)" stroke-opacity="0.52"/><path d="M13.9 133.2 L-8.7 133.2" stroke="rgb(155,155,155)" stroke-opacity="0.44"/><path d="M-16.9 82.3 L-27.0 78.9" stroke="rgb(152,152,152)" stroke-opacity="0.41"/><path d="M143.5 199.4 L144.8 209.5" stroke="rgb(133,133,133)" stroke-opacity="0.44"/><path d="M181.2 66.4 L203.3 34.7" stroke="rgb(120,120,120)" stroke-opacity="0.37"/><path d="M164.2 118.6 L182.2 109.7" stroke="rgb(170,170,170)" stroke-opacity="0.45"/><path d="M85.8 111.3 L58.7 99.3" stroke="rgb(163,163,163)" stroke-opacity="0.33"/><path d="M53.3 276.1 L37.3 304.1" stroke="rgb(135,135,135)" stroke-opacity="0.35"/><path d="M127.9 107.4 L121.8 85.3" stroke="rgb(182,182,182)" stroke-opacity="0.36"/><path d="M51.3 100.3 L38.2 95.2" stroke="rgb(136,136,136)" stroke-opacity="0.45"/><path d="M73.7 187.9 L44.2 214.4" stroke="rgb(120,120,120)" stroke-opacity="0.39"/><path d="M274.1 107.3 L291.6 104.1" stroke="rgb(122,122,122)" stroke-opacity="0.37"/><path d="M17.8 224.8 L-4.7 242.4" stroke="rgb(132,132,132)" stroke-opacity="0.31"/><path d="M189.0 203.8 L194.0 210.4" stroke="rgb(162,162,162)" stroke-opacity="0.59"/><path d="M108.0 156.5 L96.9 166.1" stroke="rgb(151,151,151)" stroke-opacity="0.31"/><path d="M56.8 217.6 L48.6 226.5" stroke="rgb(181,181,181)" stroke-opacity="0.59"/><path d="M188.3 194.0 L206.7 215.1" stroke="rgb(159,159,159)" stroke-opacity="0.62"/><path d="M160.3 77.3 L166.1 64.5" stroke="rgb(190,190,190)" stroke-opacity="0.37"/><path d="M280.5 85.9 L306.5 77.5" stroke="rgb(173,173,173)" stroke-opacity="0.32"/><path d="M211.9 195.8 L224.4 206.1" stroke="rgb(170,170,170)" stroke-opacity="0.39"/><path d="M184.8 33.3 L192.6 17.7" stroke="rgb(142,142,142)" stroke-opacity="0.63"/><path d="M177.9 126.8 L201.0 123.5" stroke="rgb(129,129,129)" stroke-opacity="0.40"/><path d="M182.4 105.9 L189.8 101.7" stroke="rgb(154,154,154)" stroke-opacity="0.44"/><path d="M135.2 164.8 L135.3 181.8" stroke="rgb(187,187,187)" stroke-opacity="0.50"/><path d="M187.5 190.0 L212.2 216.9" stroke="rgb(162,162,162)" stroke-opacity="0.53"/><path d="M95.4 30.7 L90.9 19.0" stroke="rgb(124,124,124)" stroke-opacity="0.62"/><path d="M59.1 145.1 L41.4 148.0" stroke="rgb(124,124,124)" stroke-opacity="0.31"/><path d="M72.8 61.3 L52.2 37.6" stroke="rgb(160,160,160)" stroke-opacity="0.35"/><path d="M216.5 172.9 L234.2 181.6" stroke="rgb(125,125,125)" stroke-opacity="0.62"/><path d="M124.7 6.4 L122.0 -26.9" stroke="rgb(163,163,163)" stroke-opacity="0.42"/><path d="M73.3 -9.9 L59.1 -42.8" stroke="rgb(173,173,173)" stroke-opacity="0.63"/><path d="M230.7 151.4 L239.0 153.0" stroke="rgb(168,168,168)" stroke-opacity="0.43"/><path d="M170.4 135.8 L181.2 136.6" stroke="rgb(134,134,134)" stroke-opacity="0.65"/><path d="M230.1 43.5 L245.0 29.5" stroke="rgb(178,178,178)" stroke-opacity="0.45"/><path d="M154.6 101.4 L171.5 74.2" stroke="rgb(123,123,123)" stroke-opacity="0.41"/><path d="M159.1 147.8 L192.0 168.0" stroke="rgb(134,134,134)" stroke-opacity="0.47"/><path d="M15.8 28.6 L3.6 17.9" stroke="rgb(121,121,121)" stroke-opacity="0.43"/><path d="M205.7 222.1 L221.0 241.3" stroke="rgb(163,163,163)" stroke-opacity="0.53"/><path d="M-9.1 188.1 L-26.4 194.6" stroke="rgb(152,152,152)" stroke-opacity="0.37"/><path d="M6.3 192.7 L-27.5 208.4" stroke="rgb(147,147,147)" stroke-opacity="0.43"/><path d="M73.6 97.6 L62.8 91.5" stroke="rgb(183,183,183)" stroke-opacity="0.42"/><path d="M159.5 114.2 L167.4 108.0" stroke="rgb(155,155,155)" stroke-opacity="0.59"/><path d="M205.9 193.8 L234.4 218.3" stroke="rgb(172,172,172)" stroke-opacity="0.43"/><path d="M13.5 117.7 L-17.2 113.8" stroke="rgb(177,177,177)" stroke-opacity="0.41"/><path d="M166.0 75.5 L179.0 51.4" stroke="rgb(155,155,155)" stroke-opacity="0.50"/><path d="M84.3 263.3 L81.2 271.3" stroke="rgb(137,137,137)" stroke-opacity="0.44"/><path d="M185.3 259.9 L191.4 275.3" stroke="rgb(138,138,138)" stroke-opacity="0.58"/><path d="M176.5 128.8 L187.9 127.7" stroke="rgb(188,188,188)" stroke-opacity="0.53"/><path d="M192.9 -20.4 L203.4 -48.4" stroke="rgb(145,145,145)" stroke-opacity="0.59"/><path d="M130.1 261.5 L128.9 293.6" stroke="rgb(188,188,188)" stroke-opacity="0.55"/><path d="M162.8 191.2 L171.0 208.4" stroke="rgb(186,186,186)" stroke-opacity="0.48"/><path d="M183.1 132.0 L218.2 131.3" stroke="rgb(148,148,148)" stroke-opacity="0.33"/><path d="M253.3 79.7 L264.4 74.7" stroke="rgb(178,178,178)" stroke-opacity="0.37"/><path d="M154.7 116.1 L174.2 99.5" stroke="rgb(184,184,184)" stroke-opacity="0.58"/><path d="M221.6 101.4 L248.7 91.5" stroke="rgb(146,146,146)" stroke-opacity="0.33"/><path d="M228.8 28.1 L253.9 0.1" stroke="rgb(135,135,135)" stroke-opacity="0.37"/><path d="M270.2 34.7 L302.0 11.6" stroke="rgb(188,188,188)" stroke-opacity="0.64"/><path d="M192.4 107.0 L220.6 94.2" stroke="rgb(122,122,122)" stroke-opacity="0.42"/><path d="M212.2 177.2 L234.4 189.9" stroke="rgb(155,155,155)" stroke-opacity="0.47"/><path d="M275.1 158.3 L285.0 160.1" stroke="rgb(124,124,124)" stroke-opacity="0.36"/><path d="M64.1 252.9 L57.8 263.6" stroke="rgb(139,139,139)" stroke-opacity="0.65"/><path d="M216.2 74.4 L240.3 57.1" stroke="rgb(176,176,176)" stroke-opacity="0.63"/><path d="M-27.5 140.6 L-38.2 141.1" stroke="rgb(148,148,148)" stroke-opacity="0.45"/><path d="M-0.7 80.5 L-24.9 71.1" stroke="rgb(141,141,141)" stroke-opacity="0.48"/><path d="M193.9 44.7 L203.9 29.7" stroke="rgb(168,168,168)" stroke-opacity="0.63"/><path d="M212.6 50.4 L224.8 37.5" stroke="rgb(138,138,138)" stroke-opacity="0.64"/><path d="M28.2 116.6 L13.9 114.4" stroke="rgb(188,188,188)" stroke-opacity="0.34"/><path d="M214.6 135.5 L239.8 136.3" stroke="rgb(125,125,125)" stroke-opacity="0.48"/><path d="M20.5 215.5 L-0.6 230.8" stroke="rgb(182,182,182)" stroke-opacity="0.33"/><path d="M214.9 271.6 L226.2 291.2" stroke="rgb(171,171,171)" stroke-opacity="0.39"/><path d="M92.2 140.3 L70.6 144.0" stroke="rgb(180,180,180)" stroke-opacity="0.48"/><path d="M201.6 187.1 L208.5 192.8" stroke="rgb(153,153,153)" stroke-opacity="0.35"/><path d="M140.2 105.2 L142.8 91.2" stroke="rgb(149,149,149)" stroke-opacity="0.30"/><path d="M107.4 260.0 L104.0 275.4" stroke="rgb(183,183,183)" stroke-opacity="0.34"/><path d="M129.9 90.5 L127.0 66.3" stroke="rgb(152,152,152)" stroke-opacity="0.55"/><path d="M89.1 -12.4 L86.5 -20.7" stroke="rgb(172,172,172)" stroke-opacity="0.59"/><path d="M58.1 64.5 L31.4 40.8" stroke="rgb(188,188,188)" stroke-opacity="0.52"/><path d="M-10.9 105.5 L-38.0 100.4" stroke="rgb(137,137,137)" stroke-opacity="0.38"/><path d="M126.7 -9.3 L124.6 -46.1" stroke="rgb(160,160,160)" stroke-opacity="0.51"/><path d="M176.2 99.2 L201.6 78.4" stroke="rgb(144,144,144)" stroke-opacity="0.61"/><path d="M174.8 177.5 L195.6 200.8" stroke="rgb(153,153,153)" stroke-opacity="0.44"/><path d="M-13.1 197.3 L-36.4 207.4" stroke="rgb(136,136,136)" stroke-opacity="0.37"/><path d="M37.3 31.6 L29.6 23.6" stroke="rgb(165,165,165)" stroke-opacity="0.62"/><path d="M175.9 124.8 L199.6 120.0" stroke="rgb(163,163,163)" stroke-opacity="0.48"/><path d="M114.4 84.8 L110.4 75.4" stroke="rgb(133,133,133)" stroke-opacity="0.31"/><path d="M143.6 19.4 L146.4 -17.5" stroke="rgb(181,181,181)" stroke-opacity="0.35"/><path d="M156.8 183.0 L170.8 215.0" stroke="rgb(156,156,156)" stroke-opacity="0.62"/><path d="M163.1 152.1 L194.8 173.8" stroke="rgb(179,179,179)" stroke-opacity="0.33"/><path d="M202.1 179.6 L219.8 192.0" stroke="rgb(165,165,165)" stroke-opacity="0.45"/><path d="M113.3 117.0 L88.8 99.0" stroke="rgb(145,145,145)" stroke-opacity="0.36"/><path d="M8.3 170.7 L-11.8 176.7" stroke="rgb(144,144,144)" stroke-opacity="0.51"/><path d="M250.8 211.5 L266.0 221.8" stroke="rgb(130,130,130)" stroke-opacity="0.58"/><path d="M92.9 -10.8 L85.0 -37.8" stroke="rgb(171,171,171)" stroke-opacity="0.50"/><path d="M174.8 235.3 L181.7 252.9" stroke="rgb(153,153,153)" stroke-opacity="0.40"/><path d="M233.9 221.6 L243.6 230.3" stroke="rgb(171,171,171)" stroke-opacity="0.35"/><path d="M85.4 223.4 L75.8 240.8" stroke="rgb(175,175,175)" stroke-opacity="0.57"/><path d="M27.3 205.4 L18.8 211.2" stroke="rgb(163,163,163)" stroke-opacity="0.41"/><path d="M258.9 224.1 L290.9 247.6" stroke="rgb(126,126,126)" stroke-opacity="0.38"/><path d="M249.3 91.6 L267.0 85.2" stroke="rgb(171,171,171)" stroke-opacity="0.50"/><path d="M55.3 116.2 L16.1 107.9" stroke="rgb(147,147,147)" stroke-opacity="0.55"/><path d="M147.3 -33.7 L148.0 -42.4" stroke="rgb(133,133,133)" stroke-opacity="0.56"/><path d="M131.5 216.2 L131.1 225.8" stroke="rgb(145,145,145)" stroke-opacity="0.53"/><path d="M197.3 137.2 L214.1 138.4" stroke="rgb(163,163,163)" stroke-opacity="0.49"/><path d="M-30.0 124.9 L-56.2 123.6" stroke="rgb(132,132,132)" stroke-opacity="0.52"/><path d="M148.2 99.4 L158.1 74.2" stroke="rgb(125,125,125)" stroke-opacity="0.44"/><path d="M210.0 102.5 L246.2 87.8" stroke="rgb(183,183,183)" stroke-opacity="0.49"/><path d="M63.3 83.2 L43.7 69.6" stroke="rgb(156,156,156)" stroke-opacity="0.48"/><path d="M71.3 88.0 L57.3 78.1" stroke="rgb(154,154,154)" stroke-opacity="0.50"/><path d="M108.0 259.1 L104.4 276.1" stroke="rgb(121,121,121)" stroke-opacity="0.57"/><path d="M34.8 73.0 L16.7 62.2" stroke="rgb(169,169,169)" stroke-opacity="0.32"/><path d="M102.1 208.8 L91.5 233.3" stroke="rgb(160,160,160)" stroke-opacity="0.33"/><path d="M207.4 84.2 L226.7 71.2" stroke="rgb(151,151,151)" stroke-opacity="0.32"/><path d="M251.1 215.6 L281.3 237.2" stroke="rgb(138,138,138)" stroke-opacity="0.64"/><path d="M180.8 30.2 L185.5 19.5" stroke="rgb(173,173,173)" stroke-opacity="0.46"/><path d="M144.3 164.2 L151.5 188.0" stroke="rgb(135,135,135)" stroke-opacity="0.43"/><path d="M189.6 198.8 L207.0 219.7" stroke="rgb(173,173,173)" stroke-opacity="0.43"/><path d="M129.5 -10.1 L129.0 -22.5" stroke="rgb(157,157,157)" stroke-opacity="0.56"/><path d="M138.0 174.4 L140.7 210.9" stroke="rgb(184,184,184)" stroke-opacity="0.52"/><path d="M94.2 182.8 L75.3 206.0" stroke="rgb(144,144,144)" stroke-opacity="0.52"/><path d="M136.1 80.5 L136.4 64.5" stroke="rgb(145,145,145)" stroke-opacity="0.61"/><path d="M167.8 141.3 L183.9 145.4" stroke="rgb(174,174,174)" stroke-opacity="0.31"/><path d="M190.6 146.6 L207.1 150.6" stroke="rgb(131,131,131)" stroke-opacity="0.62"/><path d="M166.4 183.0 L187.3 216.4" stroke="rgb(181,181,181)" stroke-opacity="0.47"/><path d="M153.3 205.6 L161.1 236.4" stroke="rgb(129,129,129)" stroke-opacity="0.58"/><path d="M-1.4 179.9 L-34.3 191.2" stroke="rgb(147,147,147)" stroke-opacity="0.46"/><path d="M133.6 51.4 L133.4 38.6" stroke="rgb(139,139,139)" stroke-opacity="0.53"/><path d="M207.0 128.1 L232.5 126.4" stroke="rgb(143,143,143)" stroke-opacity="0.45"/><path d="M108.4 161.6 L83.9 188.0" stroke="rgb(130,130,130)" stroke-opacity="0.49"/><path d="M37.3 177.5 L6.3 191.6" stroke="rgb(179,179,179)" stroke-opacity="0.40"/><path d="M140.7 97.4 L143.1 82.8" stroke="rgb(130,130,130)" stroke-opacity="0.54"/><path d="M-0.7 137.5 L-19.2 138.1" stroke="rgb(138,138,138)" stroke-opacity="0.38"/><path d="M95.1 72.5 L74.8 41.6" stroke="rgb(161,161,161)" stroke-opacity="0.55"/><path d="M-8.4 66.3 L-43.0 50.2" stroke="rgb(155,155,155)" stroke-opacity="0.45"/><path d="M157.6 67.6 L163.6 50.5" stroke="rgb(171,171,171)" stroke-opacity="0.64"/><path d="M122.4 34.0 L121.0 23.3" stroke="rgb(166,166,166)" stroke-opacity="0.31"/><path d="M86.4 34.5 L71.6 4.5" stroke="rgb(167,167,167)" stroke-opacity="0.58"/><path d="M-6.5 96.1 L-31.7 89.6" stroke="rgb(142,142,142)" stroke-opacity="0.33"/><path d="M-7.9 175.1 L-40.4 184.7" stroke="rgb(148,148,148)" stroke-opacity="0.48"/><path d="M31.8 103.6 L-5.6 93.0" stroke="rgb(174,174,174)" stroke-opacity="0.32"/><path d="M1.7 92.6 L-8.5 89.5" stroke="rgb(130,130,130)" stroke-opacity="0.40"/><path d="M190.6 176.4 L197.6 181.8" stroke="rgb(138,138,138)" stroke-opacity="0.33"/><path d="M169.9 54.2 L182.3 26.0" stroke="rgb(182,182,182)" stroke-opacity="0.57"/><path d="M0.4 114.7 L-20.1 111.9" stroke="rgb(163,163,163)" stroke-opacity="0.58"/><path d="M112.7 171.9 L100.9 192.4" stroke="rgb(129,129,129)" stroke-opacity="0.55"/><path d="M207.8 90.0 L237.4 72.4" stroke="rgb(164,164,164)" stroke-opacity="0.60"/><path d="M185.2 -4.0 L197.7 -38.2" stroke="rgb(189,189,189)" stroke-opacity="0.52"/><path d="M8.5 113.9 L-24.8 108.9" stroke="rgb(173,173,173)" stroke-opacity="0.62"/><path d="M187.3 102.3 L198.7 95.6" stroke="rgb(168,168,168)" stroke-opacity="0.54"/><path d="M99.9 206.5 L89.2 229.0" stroke="rgb(155,155,155)" stroke-opacity="0.64"/><path d="M200.0 158.3 L210.8 162.6" stroke="rgb(139,139,139)" stroke-opacity="0.57"/><path d="M149.6 163.7 L159.3 184.2" stroke="rgb(181,181,181)" stroke-opacity="0.62"/><path d="M174.7 142.2 L188.2 145.4" stroke="rgb(147,147,147)" stroke-opacity="0.51"/><path d="M59.4 78.1 L39.8 63.8" stroke="rgb(176,176,176)" stroke-opacity="0.36"/><path d="M125.3 182.1 L119.0 213.7" stroke="rgb(159,159,159)" stroke-opacity="0.52"/><path d="M232.9 95.6 L265.9 83.1" stroke="rgb(182,182,182)" stroke-opacity="0.61"/><path d="M199.0 94.7 L220.9 81.6" stroke="rgb(131,131,131)" stroke-opacity="0.47"/><path d="M140.8 164.7 L147.8 202.4" stroke="rgb(169,169,169)" stroke-opacity="0.64"/><path d="M173.1 1.1 L182.3 -30.8" stroke="rgb(127,127,127)" stroke-opacity="0.53"/><path d="M137.1 159.5 L138.9 182.6" stroke="rgb(167,167,167)" stroke-opacity="0.46"/><path d="M136.9 219.1 L137.6 255.1" stroke="rgb(173,173,173)" stroke-opacity="0.35"/><path d="M107.7 189.4 L92.1 221.6" stroke="rgb(186,186,186)" stroke-opacity="0.35"/><path d="M129.0 18.3 L127.7 -6.1" stroke="rgb(126,126,126)" stroke-opacity="0.35"/><path d="M138.2 108.0 L142.6 74.0" stroke="rgb(139,139,139)" stroke-opacity="0.59"/><path d="M190.7 164.8 L217.6 180.1" stroke="rgb(132,132,132)" stroke-opacity="0.61"/><path d="M122.2 98.3 L111.1 68.3" stroke="rgb(189,189,189)" stroke-opacity="0.60"/><path d="M88.9 264.6 L81.9 284.8" stroke="rgb(131,131,131)" stroke-opacity="0.57"/><path d="M106.7 144.2 L87.0 151.9" stroke="rgb(183,183,183)" stroke-opacity="0.36"/><path d="M169.6 72.0 L178.4 56.3" stroke="rgb(129,129,129)" stroke-opacity="0.49"/><path d="M256.7 130.9 L266.9 130.7" stroke="rgb(129,129,129)" stroke-opacity="0.54"/><path d="M199.7 183.7 L217.6 197.7" stroke="rgb(135,135,135)" stroke-opacity="0.53"/><path d="M214.4 139.2 L245.1 141.6" stroke="rgb(150,150,150)" stroke-opacity="0.40"/><path d="M238.6 222.5 L265.4 245.6" stroke="rgb(146,146,146)" stroke-opacity="0.62"/><path d="M201.9 227.8 L223.9 258.8" stroke="rgb(158,158,158)" stroke-opacity="0.63"/><path d="M138.3 27.5 L138.6 16.7" stroke="rgb(144,144,144)" stroke-opacity="0.37"/><path d="M126.5 60.7 L122.1 22.7" stroke="rgb(180,180,180)" stroke-opacity="0.55"/><path d="M63.9 259.2 L58.5 268.8" stroke="rgb(138,138,138)" stroke-opacity="0.52"/><path d="M213.9 218.6 L223.2 228.7" stroke="rgb(144,144,144)" stroke-opacity="0.44"/><path d="M192.6 38.2 L198.3 28.9" stroke="rgb(149,149,149)" stroke-opacity="0.31"/><path d="M222.6 126.1 L255.2 123.5" stroke="rgb(163,163,163)" stroke-opacity="0.62"/><path d="M46.1 176.9 L20.3 189.6" stroke="rgb(138,138,138)" stroke-opacity="0.59"/><path d="M79.9 181.0 L63.9 194.9" stroke="rgb(121,121,121)" stroke-opacity="0.55"/><path d="M81.1 86.6 L55.9 65.0" stroke="rgb(151,151,151)" stroke-opacity="0.53"/><path d="M113.5 115.5 L99.1 103.8" stroke="rgb(163,163,163)" stroke-opacity="0.41"/><path d="M36.3 171.2 L22.8 176.4" stroke="rgb(162,162,162)" stroke-opacity="0.58"/><path d="M186.7 31.8 L192.7 20.2" stroke="rgb(188,188,188)" stroke-opacity="0.62"/><path d="M62.4 110.3 L39.4 103.1" stroke="rgb(138,138,138)" stroke-opacity="0.50"/><path d="M186.3 284.9 L199.1 322.8" stroke="rgb(145,145,145)" stroke-opacity="0.50"/><path d="M253.9 153.1 L286.3 158.6" stroke="rgb(137,137,137)" stroke-opacity="0.39"/><path d="M23.2 74.7 L6.8 66.1" stroke="rgb(166,166,166)" stroke-opacity="0.39"/><path d="M202.2 72.2 L225.4 51.2" stroke="rgb(150,150,150)" stroke-opacity="0.62"/><path d="M32.6 104.4 L7.7 97.4" stroke="rgb(153,153,153)" stroke-opacity="0.36"/><path d="M130.8 -22.0 L130.3 -40.7" stroke="rgb(138,138,138)" stroke-opacity="0.34"/><path d="M165.2 73.4 L181.8 40.6" stroke="rgb(150,150,150)" stroke-opacity="0.57"/><path d="M103.0 170.2 L85.3 190.7" stroke="rgb(129,129,129)" stroke-opacity="0.46"/></g>
<ellipse cx="138" cy="134" rx="30" ry="14" fill="url(#glow)"/>
<g stroke="#e8e8e8" stroke-linecap="round" fill="none"><path d="M62 137.5 L113 125" stroke-width="1.6" stroke-opacity="0.85"/><path d="M32 177 L92 156" stroke-width="1.1" stroke-opacity="0.6"/><path d="M196 24 L207 60" stroke-width="1.5" stroke-opacity="0.7"/></g>
<g fill="#f0f0f0" fill-opacity="0.8"><rect x="128" y="128" width="6" height="10"/><rect x="137" y="127" width="9" height="8"/></g>
<g stroke="#000" stroke-width="1.6" stroke-opacity="0.6"><path d="M34.2 222.5 L60.9 204.6"/><path d="M54.9 227.3 L78.6 208.1"/><path d="M75.5 232.1 L96.3 211.5"/><path d="M96.2 236.9 L114.1 215.0"/><path d="M116.8 241.7 L131.8 218.5"/><path d="M137.4 246.5 L149.5 222.0"/><path d="M158.1 251.3 L167.2 225.5"/><path d="M178.8 256.1 L184.9 228.9"/><path d="M199.4 260.9 L202.7 232.4"/></g>
</g>
<g fill="none" stroke="#3fe83f" stroke-width="1"><path d="M12.1 58.5 L195.9 20.8 L208.7 63.1 L208.7 179.5 L199.4 260.9 L34.2 222.5 Z"/><path d="M12.1 58.5 L102.8 75.9 L208.7 63.1 M102.8 75.9 L110.5 171.3 L208.7 179.5 M110.5 171.3 L34.2 222.5 M195.9 20.8 L199.4 260.9"/></g>
<text x="101.7" y="252" font-family="Liberation Sans" font-size="14" fill="#fff" text-anchor="middle" stroke="#fff" stroke-width="0.2">Begin</text>
</svg>

  <div class="hr" style="top:993px"></div>
  <div class="sec" style="top:997.5px">Instruction Encoding</div>
  <div class="a" style="left:1466px;top:1024px;font-size:11.6px;line-height:14px;color:#333;white-space:nowrap">40 80 E6 01</div>
  <div class="a" style="left:1466px;top:1048px;font-size:11.6px;line-height:14px;color:#555;white-space:nowrap">CPU mode</div>
  <div class="fld" style="left:1527px;top:1045px;width:204.5px;height:20px;background:#f6f6f6"></div>
  <div class="hr" style="top:1088px;background:#e6e3ef"></div>
  <div class="sec" style="top:1092.5px">Format</div>
  <div class="hr" style="top:1113px"></div>
  <div class="sec" style="top:1117.5px">Comment</div>
  <div class="hr" style="top:1138px"></div>
  <div class="sec" style="top:1142.5px">Colors and Tags</div>
  <div class="hr" style="top:1163px"></div>
  <div class="sec" style="top:1167.5px">Cross References</div>
  <div class="hr" style="top:1188px"></div>
  <div class="sec" style="top:1192.5px">Procedure</div>

  <svg class="a" style="left:1442px;top:91px" width="322" height="1124" viewBox="1442 91 322 1124">
    <g fill="none" stroke="#2a2a2a" stroke-width="1.5" stroke-linecap="round" stroke-linejoin="round"><path d="M1715.6 202.4 L1718.6 199.4 L1721.6 202.4 M1715.6 205.6 L1718.6 208.6 L1721.6 205.6"/><path d="M1715.6 230.4 L1718.6 227.4 L1721.6 230.4 M1715.6 233.6 L1718.6 236.6 L1721.6 233.6"/><path d="M1715.2 517.1999999999999 L1718.2 514.1999999999999 L1721.2 517.1999999999999 M1715.2 520.4 L1718.2 523.4 L1721.2 520.4"/><path d="M1715.2 613.9 L1718.2 610.9 L1721.2 613.9 M1715.2 617.1 L1718.2 620.1 L1721.2 617.1"/></g>
    <path d="M1718.6 1053 L1721.6 1050 L1724.6 1053 M1718.6 1057 L1721.6 1060 L1724.6 1057" fill="none" stroke="#9a9a9a" stroke-width="1.2" stroke-linecap="round" stroke-linejoin="round"/>
    <g fill="none" stroke="#8a8a8a" stroke-width="1.1" stroke-linecap="round" stroke-linejoin="round">
      <path d="M1448.5 272 L1452 275.5 L1455.5 272"/>
      <path d="M1451 560 L1454 563.3 L1451 566.6"/>
      <path d="M1448.5 587 L1452 590.5 L1455.5 587"/>
      <path d="M1448.5 1003 L1452 1006.5 L1455.5 1003"/>
      <path d="M1451 1096.3 L1454 1099.6 L1451 1102.9"/>
      <path d="M1451 1121.3 L1454 1124.6 L1451 1127.9"/>
      <path d="M1451 1146.3 L1454 1149.6 L1451 1152.9"/>
      <path d="M1451 1171.3 L1454 1174.6 L1451 1177.9"/>
      <path d="M1451 1196.3 L1454 1199.6 L1451 1202.9"/>
    </g>
  </svg>
</div></div>

</div></div>
</body></html>
